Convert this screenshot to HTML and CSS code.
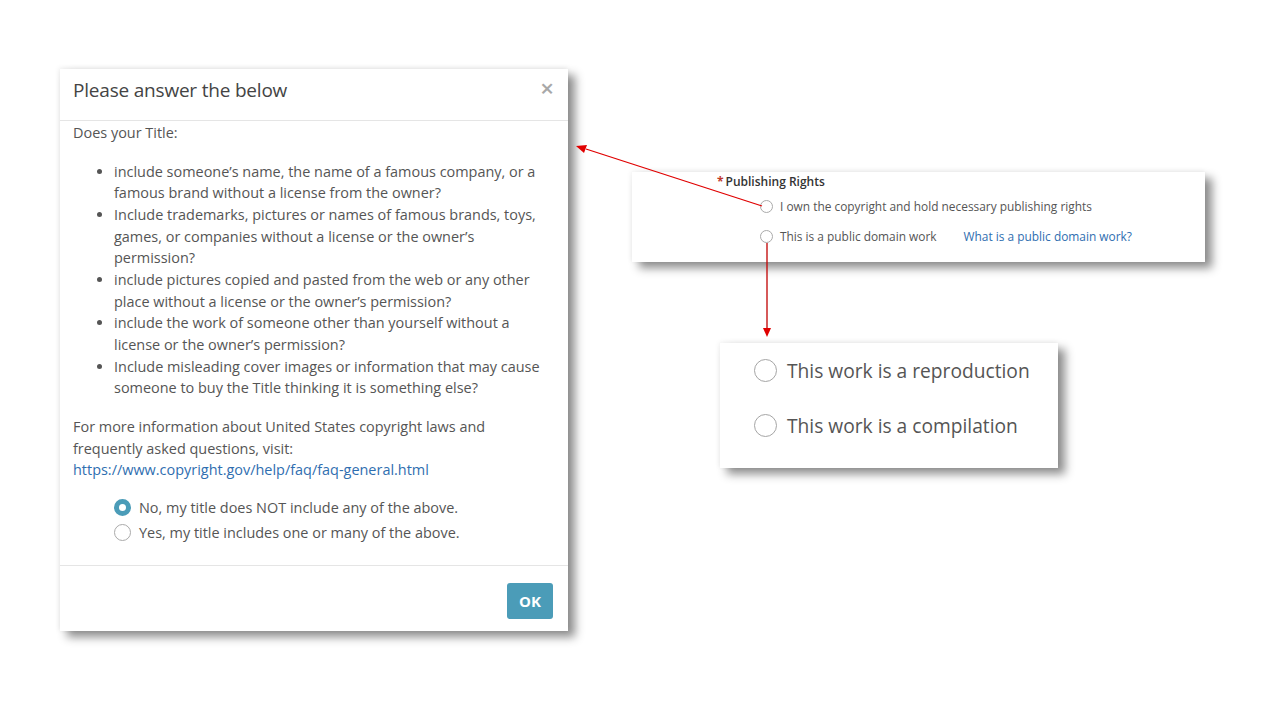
FILE: index.html
```html
<!DOCTYPE html>
<html>
<head>
<meta charset="utf-8">
<link rel="stylesheet" href="styles.css">
</head>
<body>
<div class="slide">
  <div class="modal">
    <div class="modal-header">
      <span class="modal-title">Please answer the below</span>
      <span class="close">&times;</span>
    </div>
    <div class="modal-body">
      <p class="lead">Does your Title:</p>
      <ul class="questions">
        <li>include someone’s name, the name of a famous company, or a famous brand without a license from the owner?</li>
        <li>Include trademarks, pictures or names of famous brands, toys, games, or companies without a license or the owner’s permission?</li>
        <li>include pictures copied and pasted from the web or any other place without a license or the owner’s permission?</li>
        <li>include the work of someone other than yourself without a license or the owner’s permission?</li>
        <li>Include misleading cover images or information that may cause someone to buy the Title thinking it is something else?</li>
      </ul>
      <p class="info">For more information about United States copyright laws and frequently asked questions, visit:<br><a class="link" href="#">https://www.copyright.gov/help/faq/faq-general.html</a></p>
      <div class="choices">
        <div class="choice"><span class="radio checked"></span><span>No, my title does NOT include any of the above.</span></div>
        <div class="choice"><span class="radio"></span><span>Yes, my title includes one or many of the above.</span></div>
      </div>
    </div>
    <div class="modal-footer">
      <button class="ok">OK</button>
    </div>
  </div>

  <div class="rights">
    <div class="rights-title"><span class="star">*</span>Publishing Rights</div>
    <div class="rights-row"><span class="radio small"></span><span>I own the copyright and hold necessary publishing rights</span></div>
    <div class="rights-row"><span class="radio small"></span><span class="pd">This is a public domain work</span><a class="link" href="#">What is a public domain work?</a></div>
  </div>

  <div class="work">
    <div class="work-row"><span class="radio large"></span><span>This work is a reproduction</span></div>
    <div class="work-row"><span class="radio large"></span><span>This work is a compilation</span></div>
  </div>

  <svg class="arrows" width="1280" height="720" viewBox="0 0 1280 720">
    <line x1="762" y1="206" x2="586" y2="149" stroke="#e00000" stroke-width="1.3"/>
    <polygon points="576,146 587,145 584,153" fill="#e00000"/>
    <line x1="767" y1="243" x2="767" y2="329" stroke="#c00000" stroke-width="1.3"/>
    <polygon points="763,328 771,328 767,337" fill="#e00000"/>
  </svg>
</div>
</body>
</html>
```

FILE: styles.css
```css
* { box-sizing: border-box; }
html, body { margin: 0; padding: 0; background: #fff; }
body { font-family: "Open Sans", "Liberation Sans", sans-serif; color: #555; }
.slide { position: relative; width: 1280px; height: 720px; overflow: hidden; background: #fff; }

.modal {
  position: absolute; left: 60px; top: 69px; width: 508px; height: 562px;
  background: #fff;
  display: flex; flex-direction: column;
  box-shadow: 7px 6px 9px rgba(0,0,0,0.45), -1px -1px 5px rgba(0,0,0,0.08);
}
.modal-header {
  height: 52px; padding: 0 14px 10px 13px;
  display: flex; align-items: center; justify-content: space-between;
  border-bottom: 1px solid #e5e5e5;
}
.modal-title { font-size: 19px; color: #444; letter-spacing: -0.2px; }
.close { font-size: 24px; color: #a8a8a8; font-weight: 600; line-height: 1; margin-top: -3px; }
.modal-body { flex: 1; padding: 1px 13px 0 13px; font-size: 14.45px; line-height: 21.65px; }
.modal-body p { margin: 0; }
.questions { margin: 17px 0 17px 0; padding-left: 41px; }
.questions li { padding-left: 0; }
.link { color: #2f6eb0; text-decoration: none; }
.choices { margin-top: 14px; padding-left: 41px; display: flex; flex-direction: column; }
.choice { display: flex; align-items: center; height: 25px; gap: 8px; }
.radio {
  display: inline-block; width: 17px; height: 17px; border-radius: 50%;
  border: 1px solid #aaa; background: #fff; flex: none;
}
.radio.checked { border: 5px solid #4b9cb8; background: #fff; }
.modal-footer {
  height: 66px; border-top: 1px solid #e5e5e5;
  display: flex; justify-content: flex-end; align-items: flex-start;
  padding: 17px 15px 0 0;
}
.ok {
  width: 46px; height: 36px; border: none; border-radius: 3px;
  background: #4b9cb8; color: #fff; font-family: "Open Sans", sans-serif;
  font-size: 15px; font-weight: 700; padding: 0;
}

.rights {
  position: absolute; left: 632px; top: 172px; width: 573px; height: 90px;
  background: #fff; padding: 1px 0 0 85px;
  box-shadow: 7px 6px 9px rgba(0,0,0,0.45), -1px -1px 5px rgba(0,0,0,0.06);
}
.rights-title { color: #333; font-weight: 600; height: 18px; line-height: 18px; font-size: 12px; }
.star { color: #c0392b; margin-right: 2px; font-weight: 700; }
.rights-row { display: flex; align-items: center; height: 30px; padding-left: 43px; gap: 7px; color: #555; font-size: 11.9px; }
.radio.small { width: 13px; height: 13px; }
.pd { margin-right: 20px; }

.work {
  position: absolute; left: 720px; top: 343px; width: 338px; height: 125px;
  background: #fff; padding: 11px 0 0 34px;
  box-shadow: 7px 6px 9px rgba(0,0,0,0.45), -1px -1px 5px rgba(0,0,0,0.06);
  display: flex; flex-direction: column; gap: 22px;
}
.work-row { display: flex; align-items: center; gap: 10px; font-size: 19.2px; color: #555; height: 33px; }
.radio.large { width: 23px; height: 23px; border-color: #a5a5a5; }

.arrows { position: absolute; left: 0; top: 0; pointer-events: none; }
```
